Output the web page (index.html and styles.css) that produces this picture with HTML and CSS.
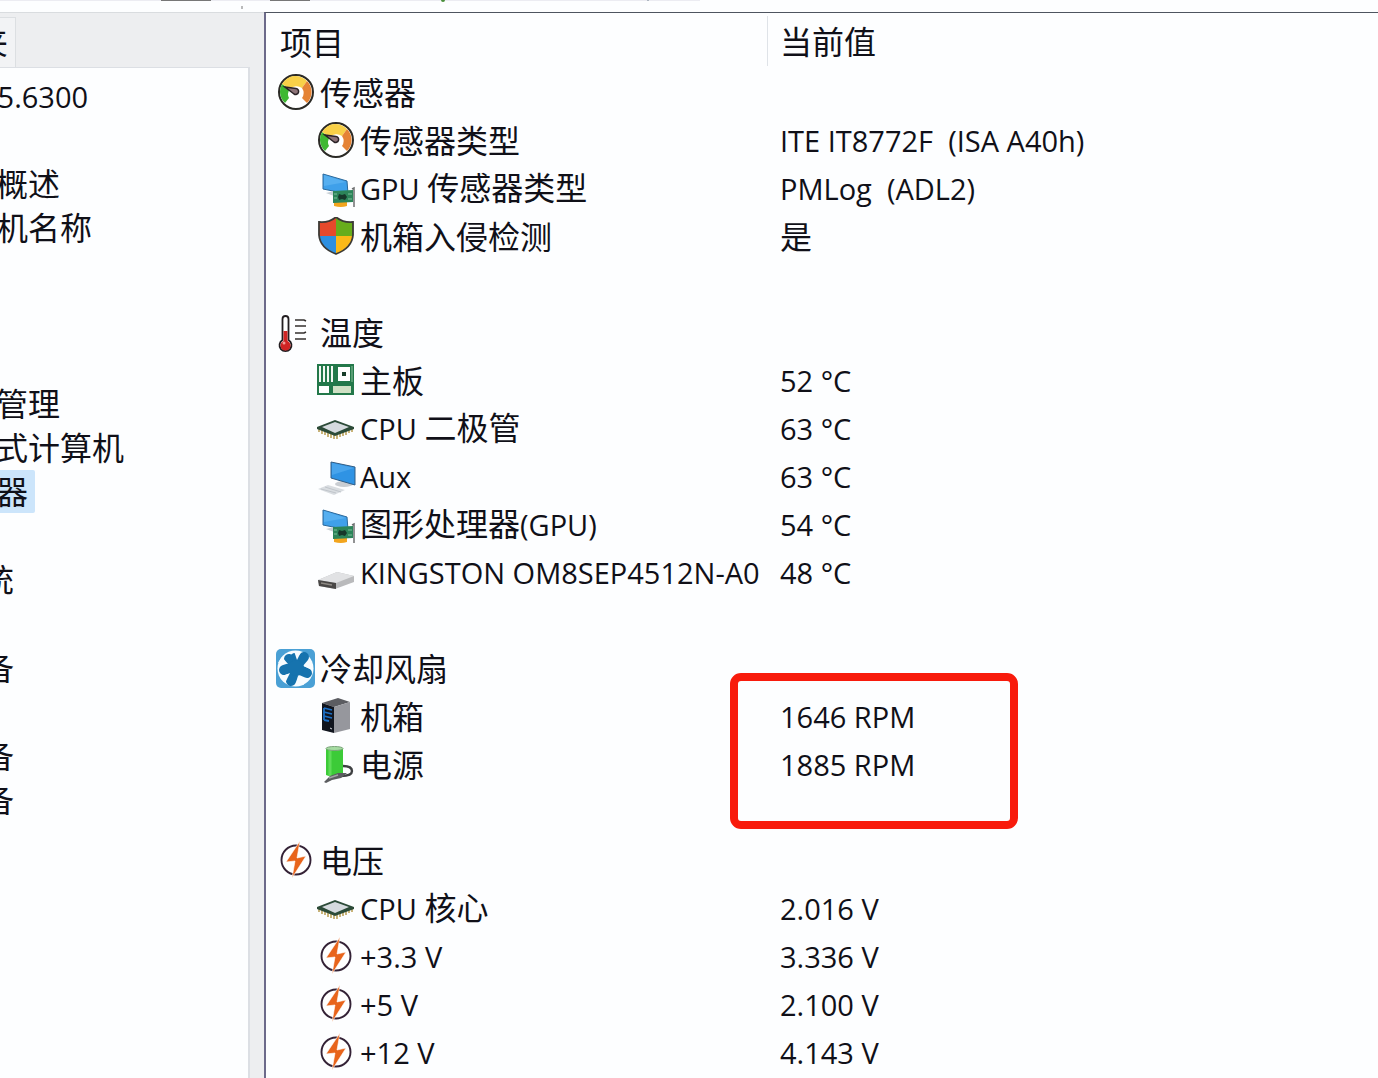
FILE: index.html
```html
<!DOCTYPE html>
<html lang="zh-CN">
<head>
    <meta charset="UTF-8">
    <meta name="viewport" content="width=device-width, initial-scale=1.0">
    <title>传感器</title>
    <link rel="stylesheet" href="styles.css">
</head>
<body>
    <!-- icons -->
    <svg class="sprite" aria-hidden="true">
        <symbol id="gauge" viewBox="0 0 40 40">
            <circle cx="20" cy="19" r="17" fill="#fff" stroke="#2b2a26" stroke-width="2"/>
            <path d="M9 30A15.500 15.500 0 0 1 6 11L14 16A8 8 0 0 0 13 25Z" fill="#3fb832"/>
            <path d="M6 11A15.500 15.500 0 0 1 31 8L26 15A9 9 0 0 0 14 16Z" fill="#f8d048"/>
            <path d="M31 8A15.500 15.500 0 0 1 31 30L26 25A9 9 0 0 0 26 15Z" fill="#e58335"/>
            <path d="M9 14L20 15.500A3 3 0 1 1 18 21Z" fill="#8d7378" stroke="#2a2226" stroke-width="1.500"/>
        </symbol>
        <symbol id="gpu" viewBox="0 0 40 40">
            <path d="M7 5L31 12L32 25L7 20Z" fill="#3fa0ea" stroke="#2c699b"/>
            <path d="M8 6L30 13L8 17Z" fill="#56aff0"/>
            <path d="M10 24L18 22V27Z" fill="#c8cfd4"/>
            <path d="M18 33H31V37Q25 39 18 37Z" fill="#f2a51e"/>
            <path d="M17 22L37 21V33L17 34Z" fill="#2c8459"/>
            <path d="M23 25L26 26L29 25L31 28L29 31L26 30L23 31L22 28Z" fill="#17382b"/>
            <path d="M18 25H21M18 29H21M32 25H36M32 30H36" stroke="#7cc09a"/>
            <path d="M36 20L38 19V38" fill="none" stroke="#6d6f70" stroke-width="1.500"/>
        </symbol>
        <symbol id="shield" viewBox="0 0 40 40">
            <path d="M20 0V19H3V5Q13 6 20 0Z" fill="#e6492b"/>
            <path d="M20 0Q27 6 37 5V19H20Z" fill="#67ad1c"/>
            <path d="M3 19H20V37Q5 31 3 19Z" fill="#2d8fe0"/>
            <path d="M37 19H20V37Q35 31 37 19Z" fill="#fbb917"/>
            <path d="M20 0Q27 6 37 5V18Q36 31 20 37Q4 31 3 18V5Q13 6 20 0Z" fill="none" stroke="#3b3a36" stroke-width="1.800"/>
        </symbol>
        <symbol id="thermo" viewBox="0 0 40 40">
            <path d="M6.500 6Q6.500 3 9.500 3T12.500 6V27A6 6 0 1 1 6.500 27Z" fill="#fff" stroke="#221d20" stroke-width="1.800"/>
            <path d="M7.500 18H11.500V28A5 5 0 1 1 7.500 28Z" fill="#cf2424"/>
            <circle cx="8" cy="30" r="1.500" fill="#f09a95"/>
            <path d="M19 7H28L30 8M19 13H30M19 20H28L30 19M19 26H30" fill="none" stroke="#34302f" stroke-width="1.600"/>
        </symbol>
        <symbol id="board" viewBox="0 0 40 40">
            <path d="M1 3H38V34H1Z" fill="#23784a"/>
            <path d="M3 5H5V21H3ZM7 5H9V21H7ZM11 5H13V21H11ZM15 5H17V21H15Z" fill="#f3f8f3"/>
            <path d="M22 6H34V20H22ZM3 25H13V32H3Z" fill="#fff"/>
            <path d="M17 25H35V32H17Z" fill="#cfe0c4"/>
            <path d="M26 11H30V15H26Z" fill="#173d29"/>
            <path d="M36 5V21" stroke="#8cc29d"/>
        </symbol>
        <symbol id="chip" viewBox="0 0 40 40">
            <path d="M3 20V23M6 21V25M9 22V26M12 23V28M15 24V29M18 25V30M21 25V30M24 24V28M27 23V27M30 22V26M33 21V24M36 20V23" stroke="#b29442" stroke-width="1.400"/>
            <path d="M1 18L19 11L38 18V20L19 27L1 20Z" fill="#2c4b38"/>
            <path d="M6 18L19 13L33 18L19 24Z" fill="#d5dade"/>
        </symbol>
        <symbol id="computer" viewBox="0 0 40 40">
            <ellipse cx="28" cy="27" rx="9" ry="3" fill="#c9cdd2"/>
            <path d="M15 5L39 10V28L15 21Z" fill="#2f93e4" stroke="#315d85"/>
            <path d="M16 6L38 11L16 18Z" fill="#48a4ec"/>
            <path d="M2 32L12 28L29 33L18 38Z" fill="#d9dde1"/>
            <path d="M5 32L20 36M9 30L25 35" stroke="#c0c5cb"/>
        </symbol>
        <symbol id="drive" viewBox="0 0 40 40">
            <path d="M2 27L21 19L38 23V29L19 36L3 33Z" fill="#b9babc"/>
            <path d="M2 27L21 19L38 23L20 30Z" fill="#e1e2e4"/>
            <path d="M2 27L20 30V36L3 33Z" fill="#494746"/>
            <path d="M5 30L16 32" stroke="#8e8a84" stroke-width="1.500"/>
        </symbol>
        <symbol id="fan" viewBox="0 0 40 40">
            <rect x="0" y="0" width="39" height="39" rx="5" fill="#4aa0d5"/>
            <circle cx="19.500" cy="19.500" r="18" fill="#f7fcff"/>
            <path d="M19 13V9M22 15L28 8M24 21L31 24M18 24L15 32M14 19L8 21M13 10L17 15" fill="none" stroke="#1673ae" stroke-width="10" stroke-linecap="round"/>
            <circle cx="20" cy="19" r="8" fill="#1673ae"/>
            <path d="M18 2L21 11L25 3ZM37 15L28 17L36 21ZM28 36L22 26L21 36ZM4 28L14 24L10 32ZM2 14L12 15L6 8Z" fill="#f7fcff"/>
        </symbol>
        <symbol id="tower" viewBox="0 0 40 40">
            <path d="M6 6L22 1L34 5L18 10Z" fill="#5b5c61"/>
            <path d="M18 10L34 5V32L18 36Z" fill="#96979d"/>
            <path d="M6 6L18 10V36L6 33Z" fill="#11151e"/>
            <path d="M8 11L16 13M8 15L16 17M8 19L16 21M8 23L13 24M8 11V23" stroke="#1d6fc4" stroke-width="1.800"/>
            <path d="M14 31L16 32" stroke="#d5d8dd"/>
        </symbol>
        <symbol id="battery" viewBox="0 0 40 40">
            <path d="M27 21Q36 21 36 26T25 31" fill="none" stroke="#3e4042" stroke-width="2.400"/>
            <path d="M10 4V30Q18 34 27 30V4Z" fill="#3ccb38"/>
            <path d="M14 5V31" stroke="#5fdc58" stroke-width="3"/>
            <ellipse cx="18.500" cy="3.500" rx="8.500" ry="2" fill="#a5dca2" stroke="#7ba47b"/>
            <path d="M8 37L14 31L22 28L31 28L25 33L16 35L10 38Z" fill="#5b5d60"/>
            <path d="M13 33L22 30" stroke="#a2a5a6" stroke-width="1.500"/>
        </symbol>
        <symbol id="bolt" viewBox="0 0 40 40">
            <circle cx="20" cy="19" r="14.500" fill="#fff" stroke="#342236" stroke-width="1.900"/>
            <path d="M24 0L10 21L19 20L16 37L30 15L21 17Z" fill="#e8641b" stroke="#fff" stroke-width=".6"/>
        </symbol>
    </svg>

    <header class="toolbar">
        <svg width="700" height="11" aria-hidden="true">
            <path d="M0 .5H700" stroke="#ececf2"/>
            <path d="M161 0H211V1H161ZM270 0H310V1H270Z" fill="#777"/>
            <path d="M242 6V9" stroke="#777"/>
            <circle cx="443" cy="0" r="2" fill="#4b8f3c"/>
            <circle cx="648" cy="0" r="1" fill="#9aa6b0"/>
        </svg>
    </header>

    <div class="window">
        <aside class="sidebar">
            <button class="tab" type="button">夹</button>
            <ul class="tree">
                <li><span class="en version">35.6300</span></li>
                <li></li>
                <li><span>概述</span></li>
                <li><span>机名称</span></li>
                <li></li>
                <li></li>
                <li></li>
                <li><span>管理</span></li>
                <li><span>式计算机</span></li>
                <li><span class="selected">器</span></li>
                <li></li>
                <li class="outer"><span>统</span></li>
                <li></li>
                <li class="outer"><span>备</span></li>
                <li></li>
                <li class="outer"><span>备</span></li>
                <li class="outer"><span>备</span></li>
            </ul>
        </aside>

        <main class="content">
            <table>
                <thead>
                    <tr><th class="item">项目</th><th><div class="divider">当前值</div></th></tr>
                </thead>
                <tbody>
                    <tr><td><div class="name group"><svg><use href="#gauge"/></svg>传感器</div></td><td></td></tr>
                    <tr><td><div class="name"><svg><use href="#gauge"/></svg>传感器类型</div></td><td class="en">ITE IT8772F&nbsp; (ISA A40h)</td></tr>
                    <tr><td><div class="name"><svg><use href="#gpu"/></svg><p><span class="en">GPU </span>传感器类型</p></div></td><td class="en">PMLog&nbsp; (ADL2)</td></tr>
                    <tr><td><div class="name"><svg><use href="#shield"/></svg>机箱入侵检测</div></td><td>是</td></tr>
                    <tr><td></td><td></td></tr>
                    <tr><td><div class="name group"><svg><use href="#thermo"/></svg>温度</div></td><td></td></tr>
                    <tr><td><div class="name"><svg><use href="#board"/></svg>主板</div></td><td class="en">52 °C</td></tr>
                    <tr><td><div class="name"><svg><use href="#chip"/></svg><p><span class="en">CPU </span>二极管</p></div></td><td class="en">63 °C</td></tr>
                    <tr><td><div class="name"><svg><use href="#computer"/></svg><span class="en">Aux</span></div></td><td class="en">63 °C</td></tr>
                    <tr><td><div class="name"><svg><use href="#gpu"/></svg><p>图形处理器<span class="en">(GPU)</span></p></div></td><td class="en">54 °C</td></tr>
                    <tr><td><div class="name"><svg><use href="#drive"/></svg><span class="en">KINGSTON OM8SEP4512N-A0</span></div></td><td class="en">48 °C</td></tr>
                    <tr><td></td><td></td></tr>
                    <tr><td><div class="name group"><svg><use href="#fan"/></svg>冷却风扇</div></td><td></td></tr>
                    <tr><td><div class="name"><svg><use href="#tower"/></svg>机箱</div></td><td class="en marked">1646 RPM</td></tr>
                    <tr><td><div class="name"><svg><use href="#battery"/></svg>电源</div></td><td class="en">1885 RPM</td></tr>
                    <tr><td></td><td></td></tr>
                    <tr><td><div class="name group"><svg><use href="#bolt"/></svg>电压</div></td><td></td></tr>
                    <tr><td><div class="name"><svg><use href="#chip"/></svg><p><span class="en">CPU </span>核心</p></div></td><td class="en">2.016 V</td></tr>
                    <tr><td><div class="name"><svg><use href="#bolt"/></svg><span class="en">+3.3 V</span></div></td><td class="en">3.336 V</td></tr>
                    <tr><td><div class="name"><svg><use href="#bolt"/></svg><span class="en">+5 V</span></div></td><td class="en">2.100 V</td></tr>
                    <tr><td><div class="name"><svg><use href="#bolt"/></svg><span class="en">+12 V</span></div></td><td class="en">4.143 V</td></tr>
                </tbody>
            </table>
        </main>
    </div>
</body>
</html>
```
FILE: styles.css
```css
* {
    box-sizing: border-box;
}
body {
    display: flex;
    flex-direction: column;
    height: 100vh;
    margin: 0;
    overflow: hidden;
    background: #fdfeff;
    color: #101018;
    font-family: "Noto Sans CJK SC", sans-serif;
    font-size: 32px;
    line-height: 44px;
}
p {
    margin: 0;
}
.en {
    font-family: "Open Sans", "Noto Sans", sans-serif;
    font-size: 29px;
}
.sprite {
    display: none;
}
.toolbar {
    flex: none;
    height: 12px;
    overflow: hidden;
}
.toolbar svg {
    display: block;
}
.window {
    display: flex;
    flex: 1;
    min-height: 0;
}

/* left pane */
.sidebar {
    display: flex;
    flex-direction: column;
    flex: none;
    width: 264px;
    padding: 4px 14px 0 0;
    border-top: 1px solid #d9dcdf;
    background: #edeef0;
}
.tab {
    display: flex;
    justify-content: flex-end;
    width: 16px;
    height: 50px;
    padding: 0 7px 0 0;
    border: 1px solid #dcdfe2;
    border-width: 1px 1px 0 0;
    background: #f2f3f5;
    color: inherit;
    font: inherit;
}
.tree {
    flex: 1;
    margin: 0;
    padding: 6px 0 0;
    overflow: hidden;
    border: 2px solid #dcdfe4;
    border-width: 1px 2px 0 0;
    background: #fdfeff;
    line-height: 40px;
    list-style: none;
}
.tree li {
    height: 44px;
    margin-left: -4px;
    white-space: nowrap;
}
.tree .outer {
    margin-left: -18px;
}
.version {
    margin-left: -15px;
}
.selected {
    display: inline-block;
    height: 43px;
    padding-right: 7px;
    border-radius: 2px;
    background: #cce5fb;
}

/* sensor list */
.content {
    flex: 1;
    min-width: 0;
    overflow: hidden;
    border: 2px solid #6c6a8a;
    border-width: 1px 0 0 2px;
    border-top-color: #4e5560;
}
table {
    width: 100%;
    border-collapse: collapse;
    table-layout: fixed;
}
th {
    height: 56px;
    padding: 0;
    font-weight: 400;
    text-align: left;
}
.item {
    width: 501px;
    padding-left: 14px;
}
.divider {
    height: 50px;
    padding: 2px 12px;
    border-left: 1px solid #dfe3e8;
}
td {
    height: 48px;
    padding: 0 0 4px 13px;
    white-space: nowrap;
}
td:first-child {
    padding-left: 10px;
}
td.en {
    padding-bottom: 0;
}
.name {
    display: flex;
    align-items: center;
    height: 44px;
    margin-left: 40px;
}
.group {
    margin-left: 0;
}
.name svg {
    flex: none;
    width: 40px;
    height: 40px;
    margin: 4px 4px 0 0;
}
.name > .en {
    margin-top: 4px;
}
.marked {
    position: relative;
}
/* red frame round the fan speeds */
.marked::after {
    content: "";
    box-sizing: border-box;
    position: absolute;
    top: -20px;
    left: -37px;
    width: 288px;
    height: 156px;
    border: 8px solid #f81b0c;
    border-radius: 11px;
}
```
